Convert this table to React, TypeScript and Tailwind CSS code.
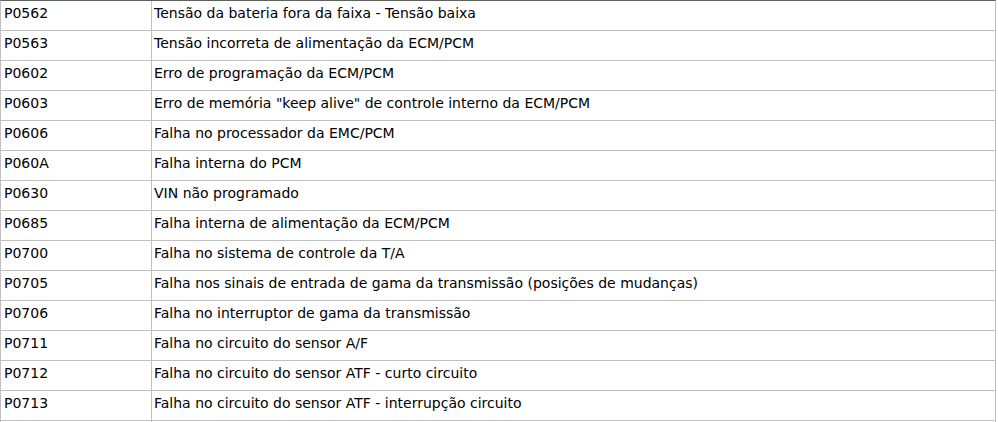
import React from "react";

const rows: [string, string][] = [
  ["P0562", "Tensão da bateria fora da faixa - Tensão baixa"],
  ["P0563", "Tensão incorreta de alimentação da ECM/PCM"],
  ["P0602", "Erro de programação da ECM/PCM"],
  ["P0603", "Erro de memória \"keep alive\" de controle interno da ECM/PCM"],
  ["P0606", "Falha no processador da EMC/PCM"],
  ["P060A", "Falha interna do PCM"],
  ["P0630", "VIN não programado"],
  ["P0685", "Falha interna de alimentação da ECM/PCM"],
  ["P0700", "Falha no sistema de controle da T/A"],
  ["P0705", "Falha nos sinais de entrada de gama da transmissão (posições de mudanças)"],
  ["P0706", "Falha no interruptor de gama da transmissão"],
  ["P0711", "Falha no circuito do sensor A/F"],
  ["P0712", "Falha no circuito do sensor ATF - curto circuito"],
  ["P0713", "Falha no circuito do sensor ATF - interrupção circuito"],
];

export default function App() {
  return (
    <div className="w-[998px] h-[422px] bg-white overflow-hidden">
      <div
        className="w-[996px] border-l border-r border-t border-l-[#c0c0c0] border-r-[#c0c0c0] border-t-[#5c635c] text-[14px] text-black"
        style={{ fontFamily: '"DejaVu Sans", Verdana, sans-serif' }}
      >
        {rows.map(([code, desc]) => (
          <div key={code} className="flex h-[30px] border-b border-[#c0c0c0]">
            <div className="w-[151px] shrink-0 border-r border-[#c0c0c0] pl-[3px] leading-[25px]">
              {code}
            </div>
            <div className="flex-1 pl-[2px] leading-[25px] whitespace-nowrap">{desc}</div>
          </div>
        ))}
        <div className="flex h-[10px]">
          <div className="w-[151px] shrink-0 border-r border-[#c0c0c0]" />
        </div>
      </div>
    </div>
  );
}
